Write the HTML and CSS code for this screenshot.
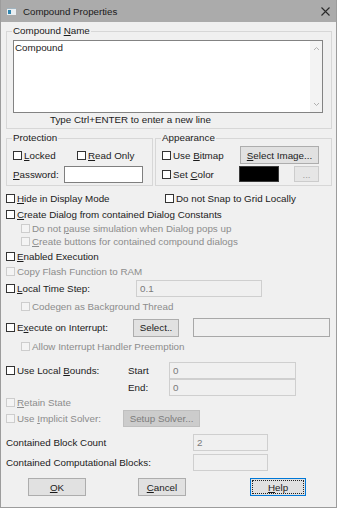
FILE: index.html
```html
<!DOCTYPE html>
<html>
<head>
<meta charset="utf-8">
<title>Compound Properties</title>
<link rel="stylesheet" href="styles.css">
</head>
<body>
<div class="window">
  <div class="titlebar">
    <svg class="appicon" width="9" height="7" viewBox="0 0 9 7"><rect x="0" y="0" width="9" height="7" fill="#e9eef1"/><rect x="0" y="0" width="9" height="1" fill="#9fb3bf"/><rect x="1" y="2" width="3" height="4" fill="#2f86b0"/></svg>
    <span class="title">Compound Properties</span>
    <svg class="close" width="9" height="9" viewBox="0 0 9 9"><path d="M0.5 0.5L8.5 8.5M8.5 0.5L0.5 8.5" stroke="#2a2a2a" stroke-width="1.1" fill="none"/></svg>
  </div>
  <div class="client">
    <fieldset class="group name-group">
      <legend>Compound <u>N</u>ame</legend>
      <div class="textarea">
        <div class="ta-text">Compound</div>
        <div class="vscroll">
          <svg width="7" height="5" viewBox="0 0 7 5"><path d="M1 4L3.5 1.5L6 4" stroke="#b0b0b0" fill="none"/></svg>
          <svg width="7" height="5" viewBox="0 0 7 5"><path d="M1 1L3.5 3.5L6 1" stroke="#b0b0b0" fill="none"/></svg>
        </div>
      </div>
      <div class="hint">Type Ctrl+ENTER to enter a new line</div>
    </fieldset>

    <div class="group-row">
      <fieldset class="group prot">
        <legend>Protection</legend>
        <div class="grow">
          <label class="cb w-locked"><span class="box"></span><span><u>L</u>ocked</span></label>
          <label class="cb"><span class="box"></span><span><u>R</u>ead Only</span></label>
        </div>
        <div class="grow">
          <span class="lbl w-pw"><u>P</u>assword:</span>
          <span class="input white w-pwi"></span>
        </div>
      </fieldset>
      <fieldset class="group appear">
        <legend>Appearance</legend>
        <div class="grow">
          <label class="cb w-bmp"><span class="box"></span><span>Use <u>B</u>itmap</span></label>
          <span class="btn w-selimg"><span><u>S</u>elect Image...</span></span>
        </div>
        <div class="grow">
          <label class="cb w-color"><span class="box"></span><span>Set <u>C</u>olor</span></label>
          <span class="swatch"></span>
          <span class="btn dim w-dots">...</span>
        </div>
      </fieldset>
    </div>

    <div class="row r-hide">
      <label class="cb w-hide"><span class="box"></span><span><u>H</u>ide in Display Mode</span></label>
      <label class="cb"><span class="box"></span><span>Do not Snap to Grid Locally</span></label>
    </div>
    <div class="row mt2">
      <label class="cb"><span class="box"></span><span><u>C</u>reate Dialog from contained Dialog Constants</span></label>
    </div>
    <div class="row indent">
      <label class="cb dis"><span class="box"></span><span>Do not <u>p</u>ause simulation when Dialog pops up</span></label>
    </div>
    <div class="row indent h12">
      <label class="cb dis"><span class="box"></span><span><u>C</u>reate buttons for contained compound dialogs</span></label>
    </div>
    <div class="row mt2">
      <label class="cb"><span class="box"></span><span><u>E</u>nabled Execution</span></label>
    </div>
    <div class="row mt1">
      <label class="cb dis"><span class="box"></span><span>Copy Flash Function to RAM</span></label>
    </div>
    <div class="row h18 mt1">
      <label class="cb w-lts"><span class="box"></span><span><u>L</u>ocal Time Step:</span></label>
      <span class="input dis w-lts-i"><span>0.1</span></span>
    </div>
    <div class="row indent mt2">
      <label class="cb dis"><span class="box"></span><span>Codegen as Background Thread</span></label>
    </div>
    <div class="row r-exec">
      <label class="cb w-exec"><span class="box"></span><span>E<u>x</u>ecute on Interrupt:</span></label>
      <span class="btn w-sel">Select..</span>
      <span class="input mid w-int"></span>
    </div>
    <div class="row indent mt2">
      <label class="cb dis"><span class="box"></span><span>Allow Interrupt Handler Preemption</span></label>
    </div>
    <div class="row h18 r-start">
      <label class="cb w-bounds"><span class="box"></span><span>Use Local <u>B</u>ounds:</span></label>
      <span class="lbl w-se">Start</span>
      <span class="input dis w-se-i"><span>0</span></span>
    </div>
    <div class="row h17">
      <span class="w-bounds"></span>
      <span class="lbl w-se">End:</span>
      <span class="input dis w-se-i"><span>0</span></span>
    </div>
    <div class="row h13">
      <label class="cb dis"><span class="box"></span><span><u>R</u>etain State</span></label>
    </div>
    <div class="row h18">
      <label class="cb dis w-impl"><span class="box"></span><span>Use <u>I</u>mplicit Solver:</span></label>
      <span class="btn disabled w-setup">Setup Solver...</span>
    </div>
    <div class="row h17 r-count">
      <span class="lbl w-count">Contained Block Count</span>
      <span class="input dis w-count-i"><span>2</span></span>
    </div>
    <div class="row h17 mt3">
      <span class="lbl w-count">Contained Computational Blocks:</span>
      <span class="input dis w-count-i"></span>
    </div>
    <div class="row h18 r-buttons">
      <span class="btn w-ok"><span><u>O</u>K</span></span>
      <span class="btn w-cancel"><span><u>C</u>ancel</span></span>
      <span class="btn focus w-help"><span><u>H</u>elp</span></span>
    </div>
  </div>
</div>
</body>
</html>
```

FILE: styles.css
```css
* { box-sizing: border-box; }
html, body { margin: 0; padding: 0; background: #ffffff; }
body {
  font-family: "Liberation Sans", Arial, sans-serif;
  font-size: 9.8px;
  color: #1b1b1b;
}
u { text-decoration: underline; text-underline-offset: 1px; }

.window {
  width: 337px;
  height: 508px;
  background: #f0f0f0;
  border: 1px solid #9c9c9c;
  border-top: 0;
  display: flex;
  flex-direction: column;
}

.titlebar {
  height: 22px;
  flex: none;
  background: #ababab;
  display: flex;
  align-items: center;
  padding-left: 6px;
  padding-right: 6px;
}
.appicon { display: block; margin-top: 1px; }
.title {
  margin-left: 7px;
  font-size: 9.7px;
  color: #1a1a1a;
}
.close { margin-left: auto; display: block; }

.client {
  display: flex;
  flex-direction: column;
  padding: 3px 4px 0 5px;
}

fieldset.group {
  margin: 0;
  padding: 0 6px 2px 6px;
  border: 1px solid #d7d7d7;
  min-width: 0;
}
fieldset.group legend {
  padding: 0 1px;
  margin-left: -1px;
  line-height: 12px;
  height: 12px;
}

.textarea {
  margin-top: 3px;
  width: 310px;
  height: 73px;
  border: 1px solid #838383;
  background: #ffffff;
  display: flex;
}
.ta-text {
  flex: 1;
  padding: 1px 1px;
  line-height: 12px;
}
.vscroll {
  width: 12px;
  background: #f3f3f3;
  display: flex;
  flex-direction: column;
  justify-content: space-between;
  align-items: center;
  padding: 5px 0 5px;
}
.vscroll svg { display: block; }
.hint {
  margin-top: 1px;
  height: 12px;
  line-height: 12px;
  padding-left: 37px;
}

.group-row {
  display: flex;
  gap: 2px;
  margin-top: 3px;
}
.prot { width: 147px; padding-bottom: 4px; }
.appear { width: 177px; padding-left: 8px; padding-bottom: 4px; }
.grow {
  display: flex;
  align-items: center;
  height: 18px;
  margin-top: 1px;
}
.grow:first-of-type { margin-top: 2px; }

.cb {
  display: inline-flex;
  align-items: center;
  gap: 2px;
  white-space: nowrap;
  flex: none;
}
.box {
  width: 9px;
  height: 9px;
  border: 1px solid #333333;
  background: #ffffff;
  flex: none;
}
.cb.dis { color: #8c8c8c; }
.cb.dis .box { border-color: #cdcdcd; background: #f4f4f4; }

.lbl { white-space: nowrap; flex: none; }

.input {
  display: flex;
  align-items: center;
  height: 17px;
  flex: none;
  padding-left: 3px;
  border: 1px solid #cfcfcf;
  background: #f0f0f0;
  color: #7a7a7a;
}
.input.white { background: #ffffff; border-color: #7f7f7f; }
.input.mid { border-color: #a8a8a8; }

.btn {
  display: flex;
  align-items: center;
  justify-content: center;
  flex: none;
  height: 18px;
  background: #e1e1e1;
  border: 1px solid #adadad;
  color: #1b1b1b;
  white-space: nowrap;
}
.btn.dim { background: #e6e6e6; border-color: #cccccc; color: #a0a0a0; height: 16px; }
.btn.disabled { background: #cccccc; border-color: #bfbfbf; color: #7d7d7d; height: 17px; }
.btn.focus { border-color: #0078d7; outline: 1px dotted #222; outline-offset: -3px; }

.swatch {
  width: 40px;
  height: 16px;
  background: #000000;
  border: 1px solid #3a3a3a;
  flex: none;
}

.w-locked { width: 64px; }
.w-pw { width: 51px; }
.w-pwi { width: 79px; }
.w-bmp { width: 78px; }
.w-selimg { width: 79px; }
.w-color { width: 77px; }
.w-dots { width: 25px; margin-left: 15px; }

.row {
  display: flex;
  align-items: center;
  height: 14px;
}
.row.indent { padding-left: 15px; }
.mt1 { margin-top: 1px; }
.mt2 { margin-top: 2px; }
.mt3 { margin-top: 3px; }
.h18 { height: 18px; }
.h17 { height: 17px; }
.h13 { height: 13px; }
.h12 { height: 12px; }
.r-hide { margin-top: 5px; }
.w-hide { width: 159px; }

.w-lts { width: 130px; }
.w-lts-i { width: 126px; }

.r-exec { margin-top: 5px; height: 19px; }
.w-exec { width: 127px; }
.w-sel { width: 46px; }
.w-int { width: 137px; height: 19px; margin-left: 14px; }

.r-start { margin-top: 8px; }
.w-bounds { width: 122px; flex: none; }
.w-se { width: 41px; }
.w-se-i { width: 127px; }

.w-impl { width: 117px; }
.w-setup { width: 77px; }

.r-count { margin-top: 7px; }
.w-count { width: 187px; }
.w-count-i { width: 75px; }

.r-buttons { margin-top: 7px; padding-left: 22px; }
.w-ok { width: 58px; }
.w-cancel { width: 48px; margin-left: 52px; }
.w-help { width: 56px; margin-left: 64px; }
```
